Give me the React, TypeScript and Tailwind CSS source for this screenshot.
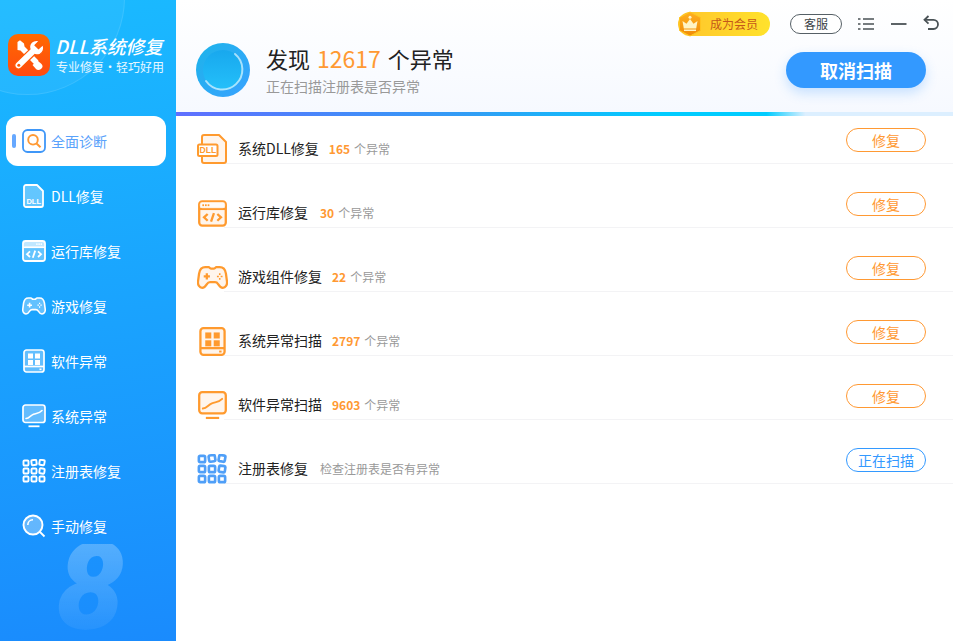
import React from "react";

const FONT = "[font-family:'Noto_Sans_CJK_SC','Noto_Sans',sans-serif]";

function DllSide() {
  return (
    <svg width="24" height="24" viewBox="0 0 24 24" fill="none">
      <path d="M4 1h11l6 6v14a2 2 0 0 1-2 2H4a2 2 0 0 1-2-2V3a2 2 0 0 1 2-2z" fill="#ffffff" fillOpacity=".32" stroke="#fff" strokeWidth="1.8" strokeLinejoin="round" />
      <text x="11.7" y="19.5" textAnchor="middle" fontSize="7.5" fontWeight="700" fill="#fff" fontFamily="Liberation Sans">DLL</text>
    </svg>
  );
}
function DllMain() {
  return (
    <svg width="31" height="30" viewBox="0 0 31 30" fill="none">
      <path d="M7 1h15l7 7v19a2 2 0 0 1-2 2H7a2 2 0 0 1-2-2V3a2 2 0 0 1 2-2z" fill="#fff5ec" stroke="#ff9a2e" strokeWidth="2" strokeLinejoin="round" />
      <rect x="1" y="10.500" width="19.500" height="11.500" rx="1.500" fill="#fff" stroke="#ff9a2e" strokeWidth="2" />
      <text x="10.800" y="19.300" textAnchor="middle" fontSize="8.600" fontWeight="700" fill="#ff9a2e" fontFamily="Liberation Sans">DLL</text>
    </svg>
  );
}
function WindowIcon({ size = 24, color = "#fff", fill = "none", dotsRight = false, sw = 1.7 }: { size?: number; color?: string; fill?: string; dotsRight?: boolean; sw?: number }) {
  return (
    <svg width={size} height={size} viewBox="0 0 24 24" fill="none">
      <rect x="1" y="2" width="22" height="20" rx="2.5" fill={fill} stroke={color} strokeWidth={sw} />
      <path d="M1 8.2h22" stroke={color} strokeWidth={sw} />
      <rect x="1.500" y="2.500" width="21" height="5.200" rx="2" fill="#fff" fillOpacity={fill === "none" ? 0 : 0.6} />
      {[0, 1, 2].map((i) => (
        <rect key={i} x={(dotsRight ? 14.2 : 3.6) + i * 2.2} y="4.4" width="1.4" height="1.5" fill={color} />
      ))}
      <path d="M8 12.4l-3 2.8 3 2.8M16 12.4l3 2.8-3 2.8M13.2 11.600l-2.400 7.200" stroke={color} strokeWidth={sw} fill="none" />
    </svg>
  );
}
function GameIcon({ size = 24, color = "#fff", fill = "none", sw = 2 }: { size?: number; color?: string; fill?: string; sw?: number }) {
  return (
    <svg width={size} height={size} viewBox="0 0 30 30" fill="none">
      <path d="M8 5h3.200c1 0 1.500 1.500 2.500 1.500h2.600c1 0 1.500-1.500 2.500-1.500H22c3.400 0 5.400 2.600 6 6.200l1 7.600c.5 3.500-1.500 6.200-4 6.200-2 0-3.400-1.700-4.600-3.600-.8-1.300-1.600-1.900-3-1.900h-4.800c-1.400 0-2.200.6-3 1.900-1.200 1.900-2.600 3.600-4.600 3.600-2.500 0-4.500-2.700-4-6.200l1-7.600C2.600 7.600 4.600 5 8 5z" fill={fill} stroke={color} strokeWidth={sw} strokeLinejoin="round" />
      <path d="M6.500 14h6M9.500 11v6" stroke={color} strokeWidth={sw} />
      <path d="M22 10.800v1.800M22 15.400v1.800M19.300 14h1.800M22.900 14h1.800" stroke={color} strokeWidth="1.500" />
    </svg>
  );
}
function SoftIcon({ size = 24, color = "#fff", fill = "none", sw = 1.7 }: { size?: number; color?: string; fill?: string; sw?: number }) {
  return (
    <svg width={size} height={size} viewBox="0 0 24 24" fill="none">
      <rect x="2" y="1" width="20" height="22" rx="2.500" fill={fill} stroke={color} strokeWidth={sw} />
      <path d="M2 17.500h20" stroke={color} strokeWidth={sw} />
      <rect x="6" y="4.500" width="5" height="5" fill={color} />
      <rect x="13" y="4.500" width="5" height="5" fill={color} />
      <rect x="6" y="11" width="5" height="5" fill={color} />
      <rect x="13" y="11" width="5" height="5" fill={color} />
      <rect x="17.500" y="19.500" width="2" height="1.600" fill={color} />
    </svg>
  );
}
function SysIcon({ size = 24, color = "#fff", fill = "none", sw = 1.7 }: { size?: number; color?: string; fill?: string; sw?: number }) {
  return (
    <svg width={size} height={size} viewBox="0 0 24 24" fill="none">
      <rect x="1" y="1" width="22" height="17.500" rx="2.500" fill={fill} stroke={color} strokeWidth={sw} />
      <path d="M4 14.500c3.500-.4 4.200-3 7.500-4.300 3-1.200 5.500-.6 8.500-3.700" stroke={color} strokeWidth="1.600" fill="none" strokeLinecap="round" />
      <path d="M6.500 22.300h11" stroke={color} strokeWidth="1.800" />
    </svg>
  );
}
function RegIcon({ size = 24, color = "#fff", sw = 1.9 }: { size?: number; color?: string; sw?: number }) {
  const cells = [
    [1.5, 1.5, 0], [9.5, 1, -8], [17.5, 1, 10],
    [1.5, 9.5, 0], [9.5, 9.5, 0], [17.5, 9.5, 8],
    [1.5, 17.5, 0], [9.5, 17.5, 0], [17.5, 17.5, 0],
  ];
  return (
    <svg width={size} height={size} viewBox="0 0 24 24" fill="none">
      {cells.map(([x, y, r], i) => (
        <rect key={i} x={x} y={y} width="5" height="5" rx="1" stroke={color} strokeWidth={sw} transform={`rotate(${r} ${x + 2.5} ${y + 2.5})`} />
      ))}
    </svg>
  );
}
function ManualIcon() {
  return (
    <svg width="24" height="24" viewBox="0 0 24 24" fill="none">
      <circle cx="11" cy="11" r="9.5" fill="#fff" fillOpacity=".32" stroke="#fff" strokeWidth="1.9" />
      <path d="M5.800 11c0-3 2.200-5.200 5.200-5.200" stroke="#fff" strokeWidth="1.600" />
      <path d="M18 18l4.500 4.500" stroke="#fff" strokeWidth="1.800" />
    </svg>
  );
}
function ActiveIcon() {
  return (
    <svg width="24" height="24" viewBox="0 0 24 24" fill="none">
      <rect x="1" y="1" width="22" height="22" rx="4.500" fill="#fff" stroke="#3f97f8" strokeWidth="1.800" />
      <circle cx="11" cy="10.800" r="4.800" stroke="#ff9933" strokeWidth="1.900" />
      <path d="M14.500 14.500l4 3.800" stroke="#ff9933" strokeWidth="2" />
    </svg>
  );
}
function LogoTools() {
  return (
    <svg width="34" height="34" viewBox="0 0 34 34" fill="none">
      <path d="M5.500 4l2.500-1.800 4 3.300.5 3 14 14-4 4-14-14-3-.5z" fill="#fff" />
      <path d="M20.500 27l3.500 4c1 1 3 1.500 5 0s2-3.500.5-5l-4-3.500z" fill="#fff" />
      <path d="M31 6.500l-4.500 4.200-3.500-3.400 4.300-4.500c-3.800-1.200-8 .2-9.300 3.700-.7 1.800-.5 3.300 0 4.700L4 24.500c-1.600 1.500-1.600 3.800-.1 5.300s3.700 1.500 5.200 0l13.800-13.300c1.500.5 3.200.6 4.800 0 3.500-1.300 4.900-5.900 3.300-10z" fill="#fff" stroke="#ff5a08" strokeWidth="1.200" />
      <circle cx="6.800" cy="27.200" r="1.500" fill="#ff5a08" />
    </svg>
  );
}
function Crown() {
  return (
    <svg width="26" height="26" viewBox="0 0 26 26" fill="none">
      <defs>
        <linearGradient id="hx" x1="0" y1="0" x2="0" y2="1">
          <stop offset="0" stopColor="#ffb01e" />
          <stop offset="1" stopColor="#f08a08" />
        </linearGradient>
      </defs>
      <path d="M13 1l10.500 5.500v13L13 25 2.500 19.500v-13z" fill="url(#hx)" stroke="#ffc41f" strokeWidth="1" />
      <path d="M5.500 10l4 2.700L13 8l3.500 4.700 4-2.700-1.300 7.500H6.800z" fill="#fff3c4" />
      <rect x="7" y="18.500" width="12" height="1.500" fill="#fff3c4" />
      <circle cx="13" cy="6.300" r="1.500" fill="#fff3c4" />
    </svg>
  );
}

const NAV: { label: string; icon: React.ReactNode; active?: boolean }[] = [
  { label: "全面诊断", icon: <ActiveIcon />, active: true },
  { label: "DLL修复", icon: <DllSide /> },
  { label: "运行库修复", icon: <WindowIcon fill="rgba(255,255,255,.32)" dotsRight sw={1.8} /> },
  { label: "游戏修复", icon: <GameIcon fill="rgba(255,255,255,.32)" /> },
  { label: "软件异常", icon: <SoftIcon fill="rgba(255,255,255,.32)" /> },
  { label: "系统异常", icon: <SysIcon fill="rgba(255,255,255,.32)" /> },
  { label: "注册表修复", icon: <RegIcon /> },
  { label: "手动修复", icon: <ManualIcon /> },
];

const ORANGE = "#ff9a2e";
const PALE = "#fff5ec";
const ROWS: { name: string; count?: string; note?: string; icon: React.ReactNode; scanning?: boolean; wide?: boolean }[] = [
  { name: "系统DLL修复", count: "165", icon: <DllMain /> },
  { name: "运行库修复", count: "30", wide: true, icon: <WindowIcon size={29} color={ORANGE} fill={PALE} sw={1.9} /> },
  { name: "游戏组件修复", count: "22", icon: <GameIcon size={31} color={ORANGE} fill={PALE} sw={2.2} /> },
  { name: "系统异常扫描", count: "2797", icon: <SoftIcon size={29} color={ORANGE} fill={PALE} sw={1.9} /> },
  { name: "软件异常扫描", count: "9603", icon: <SysIcon size={29} color={ORANGE} fill={PALE} sw={1.9} /> },
  { name: "注册表修复", note: "检查注册表是否有异常", icon: <RegIcon size={30} color="#4f9ff8" sw={2.1} />, scanning: true },
];

export default function App() {
  return (
    <div className={`flex h-[641px] w-[953px] overflow-hidden bg-white ${FONT}`}>
      <aside className="relative flex w-[176px] shrink-0 flex-col overflow-hidden bg-[linear-gradient(172deg,#1abaff_0%,#1a8bfd_100%)] text-white">
        <div className="absolute -left-[70px] -top-[100px] h-[195px] w-[195px] rounded-full border border-white/10 bg-white/5" />
        <div className="absolute left-[56px] top-[544px] bg-[linear-gradient(180deg,rgba(255,255,255,.26),rgba(255,255,255,.05))] bg-clip-text pr-3 text-[122px] font-black italic leading-[88px] text-transparent [font-family:'Roboto',sans-serif]">
          8
        </div>
        <div className="relative flex h-[116px] items-start gap-[6px] pl-2 pt-[34px]">
          <div className="flex h-[42px] w-[42px] items-center justify-center rounded-[10px] bg-[linear-gradient(180deg,#ff6a00,#ff4a10)]">
            <LogoTools />
          </div>
          <div className="flex flex-col">
            <div className="-ml-[1px] whitespace-nowrap text-[18.5px] font-medium italic leading-6">DLL系统修复</div>
            <div className="mt-[1px] whitespace-nowrap text-[12px] leading-4 text-white/90">
              专业修复<span className="inline-block w-3 text-center">·</span>轻巧好用
            </div>
          </div>
        </div>
        <nav className="relative flex flex-col gap-[5px] pl-[6px]">
          {NAV.map((n) => (
            <div
              key={n.label}
              className={`relative flex h-[50px] w-[160px] items-center gap-[5px] pl-4 text-[14px] ${n.active ? "rounded-xl bg-white text-[#5aa2fb]" : "text-white"}`}
            >
              {n.active && <span className="absolute left-[6px] top-[18px] h-[14px] w-[4px] rounded-full bg-[#66a8ff]" />}
              {n.icon}
              <span>{n.label}</span>
            </div>
          ))}
        </nav>
      </aside>

      <main className="flex min-w-0 flex-1 flex-col">
        <header className="flex h-[112px] flex-col bg-[linear-gradient(180deg,#ffffff_0%,#f6f9ff_100%)]">
          <div className="flex h-[48px] items-start justify-end pr-[14px] pt-3">
            <div className="flex h-6 w-[92px] items-center rounded-full bg-[linear-gradient(90deg,#ffc52c,#ffe22c)]">
              <span className="-ml-[1px]"><Crown /></span>
              <span className="ml-[7px] text-[12px] text-[#c4581a]">成为会员</span>
            </div>
            <div className="ml-5 mt-[2px] flex h-5 w-[52px] items-center justify-center rounded-full border border-[#566066] bg-white text-[12px] text-[#3c4448]">客服</div>
            <svg className="ml-4 mt-[5px]" width="16" height="14" viewBox="0 0 16 14" fill="none">
              <path d="M5 2h11M5 7h11M5 12h11" stroke="#4a5256" strokeWidth="1.700" />
              <path d="M0 2h2.500M0 7h2.500M0 12h2.500" stroke="#4a5256" strokeWidth="1.700" />
            </svg>
            <svg className="ml-[17px] mt-[5px]" width="16" height="14" viewBox="0 0 16 14" fill="none">
              <path d="M0 7h15.500" stroke="#4a5256" strokeWidth="1.800" />
            </svg>
            <svg className="ml-4 mt-[3px]" width="16" height="16" viewBox="0 0 16 16" fill="none">
              <path d="M5.500 1L1.500 4.800l4 3.800" stroke="#4a5256" strokeWidth="1.800" />
              <path d="M2 4.800h8.500c2.500 0 4.500 2 4.500 4.500S13 14 10.500 14H5" stroke="#4a5256" strokeWidth="1.800" />
            </svg>
          </div>
          <div className="flex items-start pl-5 pr-[27px]">
            <svg className="-mt-[5px]" width="54" height="54" viewBox="0 0 54 54">
              <defs>
                <linearGradient id="orb" x1="0" y1="0" x2="1" y2="1">
                  <stop offset="0" stopColor="#1cb4ea" />
                  <stop offset="1" stopColor="#3aa2ff" />
                </linearGradient>
                <linearGradient id="orbIn" x1="0" y1="0" x2="0" y2="1">
                  <stop offset="0" stopColor="#18a8ee" />
                  <stop offset="1" stopColor="#24c0fa" />
                </linearGradient>
              </defs>
              <circle cx="27" cy="27" r="27" fill="url(#orb)" />
              <circle cx="27" cy="27" r="20" fill="url(#orbIn)" />
              <path d="M39 11A20 20 0 1 1 10 38" fill="none" stroke="#d5f1ff" strokeOpacity=".75" strokeWidth="2" strokeLinecap="round" />
            </svg>
            <div className="ml-4 -mt-[6px] flex-1">
              <div className="flex items-baseline whitespace-pre text-[22px] leading-[32px] text-[#222]">
                发现<span className="ml-[7px] mr-[7px] text-[23px] text-[#ff9933]">12617</span>个异常
              </div>
              <div className="mt-[2px] text-[14px] leading-5 text-[#999]">正在扫描注册表是否异常</div>
            </div>
            <button className="mt-[4px] h-9 w-[140px] rounded-full bg-[#3399ff] text-[18px] font-bold text-white shadow-[0_5px_12px_rgba(51,153,255,0.25)]">
              取消扫描
            </button>
          </div>
        </header>
        <div className="h-[4px] bg-[linear-gradient(90deg,#5f6fff_0%,#2f9ff5_39%,#00ccff_62%,#00ccff_76%,#dcefff_81%,#dcefff_100%)]" />
        <div className="flex flex-col gap-4 pl-5">
          {ROWS.map((r) => (
            <div key={r.name} className="relative flex h-12">
              <div className="absolute bottom-0 left-0 z-10 flex h-[30px] w-[32px] items-center justify-center">{r.icon}</div>
              <div className="ml-[28px] flex flex-1 justify-between border-b border-[#f3f3f5] pl-[14px] pr-[27px]">
                <div className="flex items-baseline self-end pb-[4px] leading-5">
                  <span className="text-[14px] text-[#222]">{r.name}</span>
                  {r.count && <span className={`${r.wide ? "ml-3" : "ml-[10px]"} text-[12px] font-bold text-[#ff9933]`}>{r.count}</span>}
                  <span className={`${r.count ? "ml-1" : "ml-3"} text-[12px] text-[#999]`}>{r.count ? "个异常" : r.note}</span>
                </div>
                <div
                  className={`mt-3 flex h-6 w-20 items-center justify-center rounded-full border text-[14px] ${r.scanning ? "border-[#3399ff] text-[#3399ff]" : "border-[#ff9933] text-[#ff9933]"}`}
                >
                  {r.scanning ? "正在扫描" : "修复"}
                </div>
              </div>
            </div>
          ))}
        </div>
      </main>
    </div>
  );
}
